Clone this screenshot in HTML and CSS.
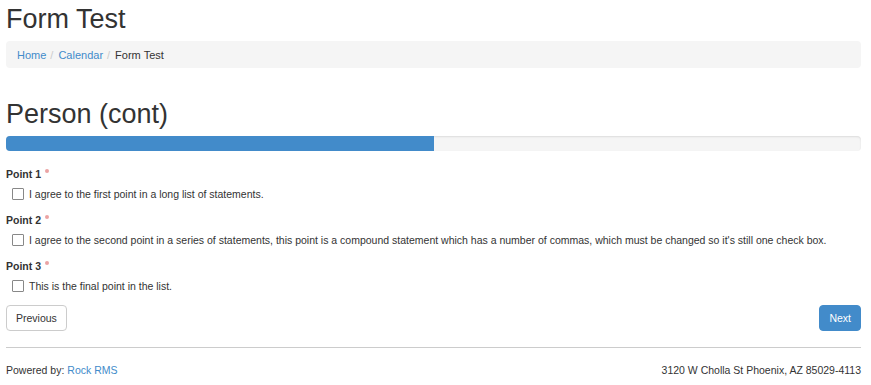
FILE: index.html
```html
<!DOCTYPE html>
<html>
<head>
<meta charset="utf-8">
<link rel="stylesheet" href="styles.css">
</head>
<body>
<div class="page">
  <h1 class="title">Form Test</h1>
  <ol class="breadcrumb">
    <li><a href="#">Home</a></li>
    <li><a href="#">Calendar</a></li>
    <li class="active">Form Test</li>
  </ol>
  <h2 class="section">Person (cont)</h2>
  <div class="progress"><div class="progress-bar" style="width:50%"></div></div>
  <div class="group">
    <div class="label">Point 1<span class="req"></span></div>
    <label class="check"><span class="box"></span>I agree to the first point in a long list of statements.</label>
  </div>
  <div class="group">
    <div class="label">Point 2<span class="req"></span></div>
    <label class="check"><span class="box"></span>I agree to the second point in a series of statements, this point is a compound statement which has a number of commas, which must be changed so it's still one check box.</label>
  </div>
  <div class="group">
    <div class="label">Point 3<span class="req"></span></div>
    <label class="check"><span class="box"></span>This is the final point in the list.</label>
  </div>
  <div class="actions">
    <a class="btn btn-default" href="#">Previous</a>
    <a class="btn btn-primary" href="#">Next</a>
  </div>
  <hr class="rule">
  <div class="footer">
    <div>Powered by: <a href="#">Rock RMS</a></div>
    <div>3120 W Cholla St Phoenix, AZ 85029-4113</div>
  </div>
</div>
</body>
</html>
```
FILE: styles.css
```css
html, body { margin: 0; padding: 0; background: #fff; }
body { font-family: "Liberation Sans", Arial, sans-serif; font-size: 10.5px; color: #333; }
a { color: #428bca; text-decoration: none; }
.page { padding: 0 10px 0 6px; }
.title { font-size: 27px; font-weight: normal; margin: 0; padding-top: 4px; line-height: 30px; height: 37px; }
.breadcrumb { list-style: none; margin: 0; padding: 0 11px; height: 27px; display: flex; align-items: center; background: #f5f5f5; border-radius: 4px; font-size: 11px; }
.breadcrumb li + li::before { content: "/"; color: #ccc; padding: 0 5px 0 4px; }
.section { font-size: 27px; font-weight: normal; margin: 0; padding-top: 29px; line-height: 34px; height: 39px; }
.progress { height: 15px; background: #f5f5f5; border-radius: 4px; overflow: hidden; box-shadow: inset 0 1px 2px rgba(0,0,0,0.1); }
.progress-bar { height: 100%; background: #428bca; }
.group { margin-top: 16px; }
.group + .group { margin-top: 12px; }
.label { font-weight: bold; line-height: 14px; display: flex; align-items: flex-start; }
.req { width: 4px; height: 4px; border-radius: 50%; background: #eba3a3; margin: 2px 0 0 4px; }
.check { display: flex; align-items: center; margin-top: 6px; padding-left: 6px; line-height: 14px; }
.box { width: 10px; height: 10px; border: 1px solid #888; border-radius: 1px; margin-right: 5px; background: #fff; flex: none; }
.actions { display: flex; justify-content: space-between; margin-top: 12px; }
.btn { display: flex; align-items: center; box-sizing: border-box; height: 26px; padding: 0 9px; border-radius: 4px; border: 1px solid #ccc; font-size: 10.5px; }
.btn-default { color: #333; background: #fff; }
.btn-primary { color: #fff; background: #428bca; border-color: #428bca; }
.rule { border: 0; border-top: 1px solid #ccc; margin: 16px 0 0 0; }
.footer { display: flex; justify-content: space-between; margin-top: 15px; line-height: 14px; }
```
